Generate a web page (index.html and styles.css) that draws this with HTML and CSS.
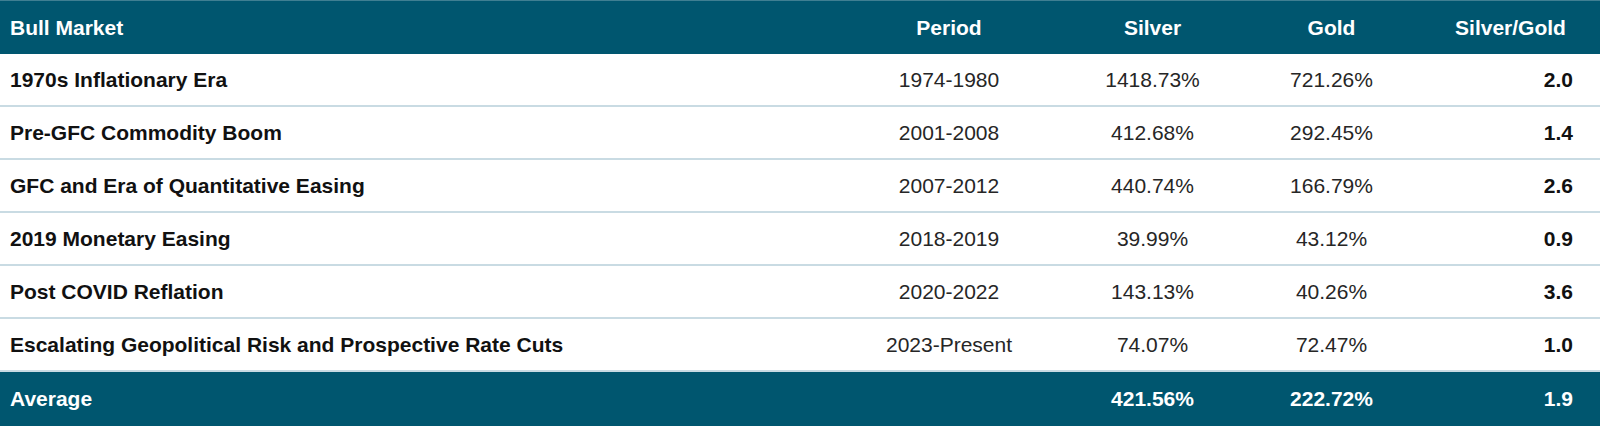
FILE: index.html
```html
<!DOCTYPE html>
<html>
<head>
<meta charset="utf-8">
<link rel="stylesheet" href="styles.css">
</head>
<body>
<table class="bull">
  <colgroup>
    <col class="c-name"><col class="c-period"><col class="c-num"><col class="c-num"><col class="c-num">
  </colgroup>
  <thead>
    <tr class="head">
      <th class="name">Bull Market</th>
      <th>Period</th>
      <th>Silver</th>
      <th>Gold</th>
      <th class="ratio-h">Silver/Gold</th>
    </tr>
  </thead>
  <tbody>
    <tr><td class="name">1970s Inflationary Era</td><td>1974-1980</td><td>1418.73%</td><td>721.26%</td><td class="ratio">2.0</td></tr>
    <tr><td class="name">Pre-GFC Commodity Boom</td><td>2001-2008</td><td>412.68%</td><td>292.45%</td><td class="ratio">1.4</td></tr>
    <tr><td class="name">GFC and Era of Quantitative Easing</td><td>2007-2012</td><td>440.74%</td><td>166.79%</td><td class="ratio">2.6</td></tr>
    <tr><td class="name">2019 Monetary Easing</td><td>2018-2019</td><td>39.99%</td><td>43.12%</td><td class="ratio">0.9</td></tr>
    <tr><td class="name">Post COVID Reflation</td><td>2020-2022</td><td>143.13%</td><td>40.26%</td><td class="ratio">3.6</td></tr>
    <tr><td class="name">Escalating Geopolitical Risk and Prospective Rate Cuts</td><td>2023-Present</td><td>74.07%</td><td>72.47%</td><td class="ratio">1.0</td></tr>
  </tbody>
  <tfoot>
    <tr class="foot"><td class="name">Average</td><td></td><td>421.56%</td><td>222.72%</td><td class="ratio">1.9</td></tr>
  </tfoot>
</table>
</body>
</html>
```

FILE: styles.css
```css
html, body {
  margin: 0;
  padding: 0;
  background: #ffffff;
}
body {
  width: 1600px;
  height: 426px;
  overflow: hidden;
  font-family: "Liberation Sans", Arial, sans-serif;
  font-size: 21px;
}
.bull {
  width: 1600px;
  border-collapse: collapse;
  table-layout: fixed;
}
.c-name { width: 835px; }
.c-period { width: 228px; }
.c-num { width: 179px; }
.bull th, .bull td {
  padding: 0;
  text-align: center;
  white-space: nowrap;
}
.head {
  background: #00566f;
  color: #ffffff;
  border-top: 1px solid #3f7f92;
}
.head th {
  font-weight: bold;
  height: 53px;
}
.bull tbody td {
  height: 51px;
  color: #262626;
  border-bottom: 2px solid #c9dbe3;
}
.bull td.name, .bull th.name {
  text-align: left;
  padding-left: 10px;
  font-weight: bold;
}
.bull tbody td.name { color: #111111; }
.bull td.ratio {
  text-align: right;
  padding-right: 27px;
  font-weight: bold;
  color: #111111;
}
.foot {
  background: #00566f;
  color: #ffffff;
}
.foot td {
  height: 54px;
  font-weight: bold;
}
.bull .foot td.ratio { color: #ffffff; }
```
